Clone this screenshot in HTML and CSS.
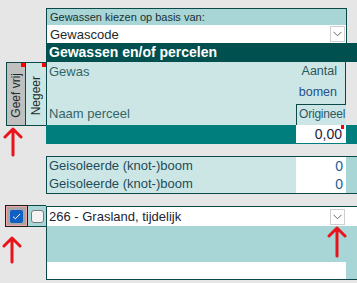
FILE: index.html
```html
<!DOCTYPE html>
<html>
<head>
<meta charset="utf-8">
<link rel="stylesheet" href="styles.css">
</head>
<body>
<div class="page">
  <div class="secA">
    <div class="side">
      <div class="btns">
        <div class="vbtn gray"><span>Geef vrij</span><i class="flag"></i></div>
        <div class="vbtn light-bg nb"><span>Negeer</span><i class="flag"></i></div>
      </div>
    </div>
    <div class="main">
      <div class="box1">
        <div class="lbl">Gewassen kiezen op basis van:</div>
        <div class="sel"><span>Gewascode</span><span class="dd"><svg width="9" height="6" viewBox="0 0 9 6"><path d="M0.5 0.8 L4.5 4.8 L8.5 0.8" fill="none" stroke="#666" stroke-width="1"/></svg></span></div>
      </div>
      <div class="hdr">Gewassen en/of percelen</div>
      <div class="light">
        <div class="c1 t-teal">Gewas</div>
        <div class="c2 rb t-teal2">Aantal</div>
        <div class="c1"></div>
        <div class="c2 rb t-blue">bomen</div>
        <div class="c1 t-teal">Naam perceel</div>
        <div class="c2 orig">Origineel</div>
      </div>
      <div class="tealrow"><div class="inp">0,00<i class="flag"></i></div></div>
    </div>
  </div>

  <div class="secB">
    <div class="spacer"></div>
    <div class="panel2">
      <div class="r2"><div class="n">Geisoleerde (knot-)boom</div><div class="v">0</div><div class="e"></div></div>
      <div class="r2"><div class="n">Geisoleerde (knot-)boom</div><div class="v">0</div><div class="e"></div></div>
    </div>
  </div>

  <div class="secC">
    <div class="checks">
      <div class="cb1"><div class="cb1in"><div class="blue"><svg width="9" height="7" viewBox="0 0 9 7"><path d="M1 3.6 L3.4 5.8 L8 1" fill="none" stroke="#fff" stroke-width="1"/></svg></div></div></div>
      <div class="cb2"><div class="wbox"></div></div>
    </div>
    <div class="panel3">
      <div class="r3a"><span>266 - Grasland, tijdelijk</span><span class="dd"><svg width="9" height="6" viewBox="0 0 9 6"><path d="M0.5 0.8 L4.5 4.8 L8.5 0.8" fill="none" stroke="#666" stroke-width="1"/></svg></span></div>
      <div class="r3b"></div>
      <div class="r3c"><div class="w"></div><div class="e"></div></div>
    </div>
  </div>

  <svg class="arrow a1" width="22" height="30" viewBox="0 0 22 30"><path d="M11 2 V28 M3 10 L11 2 L19 10" fill="none" stroke="#e8141c" stroke-width="3" stroke-linecap="round" stroke-linejoin="round"/></svg>
  <svg class="arrow a2" width="22" height="28" viewBox="0 0 22 28"><path d="M11 2 V26 M3 10 L11 2 L19 10" fill="none" stroke="#e8141c" stroke-width="3" stroke-linecap="round" stroke-linejoin="round"/></svg>
  <svg class="arrow a3" width="22" height="32" viewBox="0 0 22 32"><path d="M11 2 V30 M3 10 L11 2 L19 10" fill="none" stroke="#e8141c" stroke-width="3" stroke-linecap="round" stroke-linejoin="round"/></svg>
</div>
</body>
</html>
```

FILE: styles.css
```css
html, body {
  margin: 0;
  padding: 0;
  background: #e6e6e6;
}
.page {
  position: relative;
  width: 357px;
  height: 283px;
  box-sizing: border-box;
  padding-top: 8px;
  background: #e6e6e6;
  font-family: "Liberation Sans", Arial, sans-serif;
  font-size: 12px;
  overflow: hidden;
}
.secA {
  display: flex;
}
.side {
  width: 46px;
  flex: none;
  box-sizing: border-box;
  padding-top: 54px;
  padding-left: 6px;
}
.btns {
  display: flex;
  height: 64px;
}
.vbtn {
  position: relative;
  width: 20px;
  height: 64px;
  box-sizing: border-box;
  border: 1px solid #0b4848;
  display: flex;
  align-items: center;
  justify-content: flex-end;
  flex-direction: column;
  padding-bottom: 7px;
}
.vbtn span {
  writing-mode: vertical-rl;
  transform: rotate(180deg);
  font-size: 12px;
  color: #1a2e2e;
  line-height: 16px;
}
.vbtn.gray {
  background: #c0c0c0;
}
.vbtn.light-bg {
  background: #cce6e6;
}
.vbtn.nb {
  border-left: none;
  border-right: none;
  padding-bottom: 10px;
}
.flag {
  position: absolute;
  top: 0;
  right: 0;
  width: 4px;
  height: 4px;
  background: #ff0000;
}
.main {
  flex: 1;
  display: flex;
  flex-direction: column;
}
.box1 {
  width: 301px;
  box-sizing: border-box;
  border: 1px solid #0b4848;
  border-bottom: none;
}
.lbl {
  height: 16px;
  line-height: 16px;
  background: #a8d5d5;
  padding-left: 3px;
  color: #17302f;
  font-size: 11px;
}
.sel {
  height: 18px;
  background: #fff;
  display: flex;
  align-items: center;
  justify-content: space-between;
  padding-left: 3px;
  color: #1e2a2a;
  font-size: 13px;
}
.dd {
  width: 15px;
  height: 16px;
  box-sizing: border-box;
  border: 1px solid #cfcfcf;
  background: #fff;
  display: flex;
  align-items: center;
  justify-content: center;
  margin-right: 1px;
}
.hdr {
  height: 19px;
  line-height: 19px;
  background: #005050;
  color: #fff;
  font-weight: bold;
  font-size: 14px;
  padding-left: 3px;
}
.light {
  width: 300px;
  box-sizing: border-box;
  border-left: 1px solid #0b4848;
  background: #cce6e6;
  display: grid;
  grid-template-columns: 1fr 50px;
  grid-template-rows: 21px 21px 21px;
  font-size: 13px;
}
.c1 {
  padding-left: 2px;
  line-height: 19px;
}
.c2 {
  text-align: right;
  padding-right: 8px;
  line-height: 19px;
  font-size: 12.5px;
}
.rb {
  border-right: 1px solid #0b4848;
}
.orig {
  border-top: 1px solid #0b4848;
  border-left: 1px solid #0b4848;
  text-align: left;
  padding: 0 0 0 2px;
  line-height: 19px;
  color: #2b5a66;
  font-size: 12px;
  letter-spacing: -0.2px;
}
.t-teal {
  color: #346565;
}
.t-teal2 {
  color: #2a5757;
}
.t-blue {
  color: #24508a;
}
.tealrow {
  height: 19px;
  background: #007d7d;
  display: flex;
  justify-content: flex-end;
  padding-right: 11px;
}
.inp {
  position: relative;
  width: 50px;
  height: 18px;
  background: #fff;
  text-align: right;
  box-sizing: border-box;
  padding-right: 4px;
  font-size: 14px;
  line-height: 19px;
  color: #1c1c3c;
}
.inp .flag {
  width: 3px;
  height: 4px;
  right: 2px;
}
.secB {
  display: flex;
  margin-top: 12px;
}
.spacer {
  width: 46px;
  flex: none;
}
.panel2 {
  flex: 1;
  border-top: 1px solid #0b4848;
  border-bottom: 1px solid #0b4848;
  border-left: 1px solid #0b4848;
}
.r2 {
  display: flex;
  height: 18px;
  font-size: 13px;
  line-height: 18px;
}
.r2 .n {
  flex: 1;
  background: #cce6e6;
  padding-left: 2px;
  color: #1e4c58;
}
.r2 .v {
  width: 50px;
  background: #fff;
  text-align: right;
  padding-right: 3px;
  box-sizing: border-box;
  color: #225d96;
  font-size: 14px;
}
.r2 .e, .r3c .e {
  width: 11px;
  background: #a8d5d5;
}
.secC {
  display: flex;
  margin-top: 12px;
}
.checks {
  width: 46px;
  flex: none;
  box-sizing: border-box;
  padding-left: 5px;
  display: flex;
  height: 22px;
  margin-top: -1px;
}
.cb1 {
  width: 23px;
  height: 22px;
  box-sizing: border-box;
  border: 1px solid #1c1c1c;
  padding: 1px;
  background: #f2a6a6;
}
.cb1in {
  width: 100%;
  height: 100%;
  background: #a6a6a6;
  display: flex;
  align-items: center;
  justify-content: center;
}
.blue {
  width: 13px;
  height: 13px;
  border-radius: 2px;
  background: #0f5fc4;
  display: flex;
  align-items: center;
  justify-content: center;
}
.cb2 {
  width: 18px;
  height: 22px;
  box-sizing: border-box;
  border: 1px solid #0b4848;
  border-left: none;
  border-right: none;
  background: #a8d5d5;
  display: flex;
  align-items: center;
  justify-content: center;
}
.wbox {
  width: 13px;
  height: 13px;
  box-sizing: border-box;
  border: 1px solid #7a7a7a;
  border-radius: 3px;
  background: #f4f4f4;
}
.panel3 {
  flex: 1;
  border-top: 1px solid #0b4848;
  border-bottom: 1px solid #0b4848;
  border-left: 1px solid #0b4848;
}
.r3a {
  height: 19px;
  background: #fff;
  display: flex;
  align-items: center;
  justify-content: space-between;
  padding-left: 2px;
  padding-right: 11px;
  font-size: 13px;
  color: #1b2533;
}
.r3a .dd {
  height: 16px;
}
.r3b {
  height: 36px;
  background: #a8d5d5;
}
.r3c {
  height: 17px;
  display: flex;
}
.r3c .w {
  flex: 1;
  background: #fff;
}
.arrow {
  position: absolute;
}
.a1 {
  left: 2px;
  top: 127px;
}
.a2 {
  left: 1px;
  top: 236px;
}
.a3 {
  left: 326px;
  top: 226px;
}
```
